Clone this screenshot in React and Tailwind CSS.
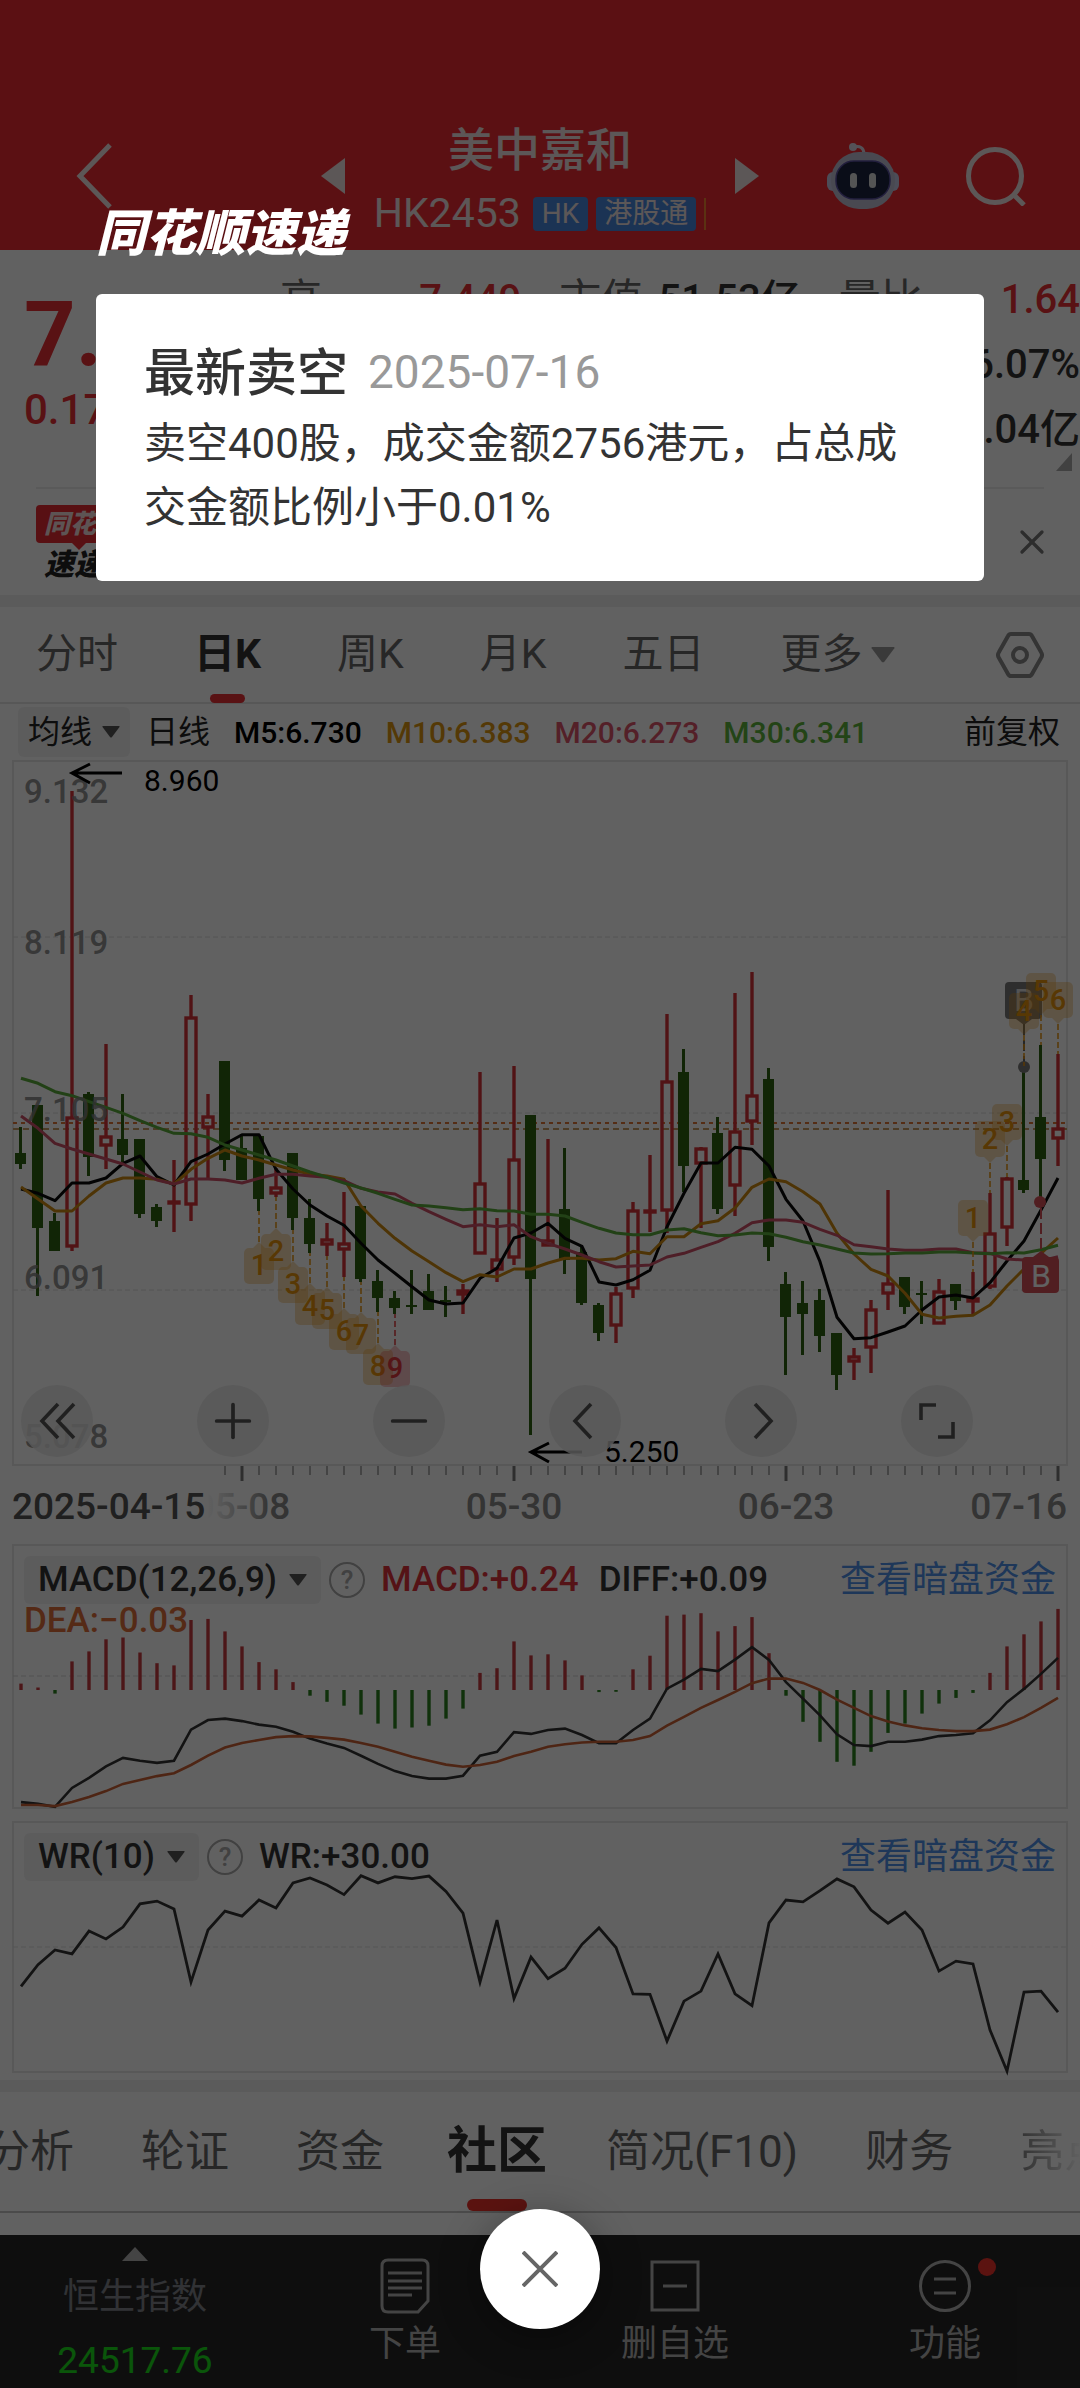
import { Minus, Plus, X } from 'lucide-react';

const FONT = "font-[Roboto,'Noto_Sans_CJK_SC',sans-serif]";

// [up, high, low, bodyTop, bodyBottom]
const candles = [
  [0, 1127, 1169, 1153, 1164], [0, 1105, 1296, 1105, 1228], [0, 1213, 1251, 1221, 1251],
  [1, 791, 1251, 1117, 1247], [0, 1092, 1176, 1094, 1157], [1, 1044, 1169, 1136, 1146],
  [0, 1094, 1165, 1139, 1155], [0, 1139, 1218, 1139, 1214], [0, 1204, 1227, 1207, 1221],
  [1, 1160, 1232, 1201, 1203], [1, 995, 1221, 1017, 1205], [1, 1094, 1180, 1116, 1128],
  [0, 1061, 1171, 1061, 1160], [0, 1135, 1180, 1148, 1180], [0, 1136, 1211, 1136, 1199],
  [1, 1168, 1197, 1187, 1194], [0, 1153, 1230, 1153, 1218], [0, 1199, 1253, 1218, 1244],
  [1, 1223, 1256, 1239, 1245], [1, 1192, 1277, 1243, 1250], [0, 1206, 1282, 1206, 1279],
  [0, 1270, 1312, 1281, 1298], [0, 1291, 1314, 1298, 1308], [0, 1270, 1314, 1305, 1307],
  [0, 1274, 1310, 1291, 1310], [0, 1286, 1317, 1300, 1302], [1, 1284, 1314, 1290, 1295],
  [1, 1072, 1254, 1183, 1254], [1, 1218, 1282, 1259, 1270], [1, 1066, 1265, 1159, 1258],
  [0, 1115, 1435, 1115, 1279], [1, 1139, 1246, 1240, 1246], [0, 1148, 1274, 1209, 1260],
  [0, 1247, 1305, 1252, 1303], [0, 1303, 1341, 1305, 1333], [1, 1287, 1343, 1293, 1326],
  [1, 1202, 1298, 1210, 1289], [1, 1155, 1232, 1210, 1212], [1, 1014, 1233, 1081, 1211],
  [0, 1049, 1192, 1072, 1166], [1, 1147, 1228, 1148, 1164], [0, 1117, 1214, 1133, 1209],
  [1, 993, 1216, 1131, 1186], [1, 972, 1145, 1095, 1122], [0, 1068, 1261, 1079, 1247],
  [0, 1272, 1375, 1284, 1317], [0, 1281, 1355, 1303, 1314], [0, 1289, 1352, 1300, 1336],
  [0, 1333, 1390, 1333, 1375], [1, 1348, 1380, 1356, 1362], [1, 1300, 1373, 1309, 1348],
  [1, 1190, 1310, 1283, 1294], [0, 1277, 1314, 1277, 1307], [0, 1281, 1324, 1293, 1295],
  [1, 1279, 1324, 1291, 1324], [0, 1284, 1310, 1284, 1301], [1, 1272, 1314, 1298, 1302],
  [1, 1193, 1289, 1233, 1287], [1, 1177, 1246, 1178, 1228], [0, 1066, 1193, 1180, 1190],
  [0, 1045, 1202, 1117, 1159], [1, 1054, 1166, 1128, 1139],
];

const ma5 = [327, 340, 362, 309, 309, 294, 250, 228, 290, 315, 245, 222, 192, 164, 164, 268, 327, 375, 408, 436, 490, 540, 580, 620, 660, 672, 669, 595, 565, 474, 459, 430, 475, 499, 606, 615, 599, 571, 440, 340, 249, 249, 202, 208, 258, 358, 423, 545, 712, 776, 773, 756, 738, 690, 651, 645, 654, 608, 543, 483, 390, 294];
const ma10 = [321, 357, 393, 393, 348, 309, 294, 294, 298, 312, 268, 235, 210, 228, 240, 255, 270, 282, 288, 298, 378, 430, 475, 513, 545, 578, 605, 584, 591, 567, 567, 549, 535, 535, 540, 536, 514, 521, 470, 470, 431, 422, 384, 322, 297, 305, 335, 372, 460, 522, 568, 588, 640, 703, 714, 709, 706, 675, 618, 567, 520, 474];
const ma20 = [108, 145, 190, 207, 222, 237, 252, 276, 300, 312, 297, 297, 300, 309, 295, 283, 283, 288, 292, 302, 325, 336, 342, 370, 395, 418, 440, 434, 440, 434, 470, 490, 507, 525, 545, 561, 558, 555, 531, 520, 502, 485, 460, 428, 420, 420, 427, 448, 466, 494, 500, 507, 511, 511, 507, 507, 518, 520, 537, 540, 543, 530];
const ma30 = [-5, 10, 35, 47, 65, 82, 100, 122, 142, 160, 161, 172, 195, 210, 225, 240, 258, 276, 292, 309, 324, 340, 358, 375, 378, 383, 389, 386, 392, 393, 403, 403, 408, 427, 445, 459, 464, 464, 450, 446, 458, 467, 465, 459, 461, 472, 485, 495, 507, 519, 522, 521, 519, 519, 516, 516, 519, 521, 518, 519, 509, 496];

const macdBars = [430, 441, 458, 368, 340, 306, 301, 343, 373, 379, 252, 249, 284, 326, 370, 390, 426, 464, 481, 492, 517, 542, 556, 553, 548, 528, 500, 400, 387, 312, 351, 348, 365, 407, 454, 453, 390, 352, 240, 237, 233, 284, 269, 244, 345, 464, 537, 593, 649, 660, 621, 568, 542, 514, 486, 470, 456, 400, 326, 292, 256, 221];
const diff = [762, 767, 775, 722, 694, 662, 638, 646, 652, 646, 559, 532, 528, 535, 545, 551, 565, 584, 598, 610, 632, 655, 675, 689, 696, 696, 688, 632, 621, 566, 571, 560, 556, 574, 597, 597, 560, 528, 444, 419, 389, 395, 363, 328, 364, 426, 472, 519, 572, 602, 605, 593, 593, 587, 577, 574, 569, 533, 482, 445, 403, 358];
const dea = [770, 770, 773, 762, 748, 731, 711, 700, 689, 681, 658, 632, 609, 596, 588, 580, 577, 578, 582, 587, 596, 607, 621, 635, 646, 657, 663, 658, 649, 633, 621, 607, 600, 595, 593, 593, 588, 577, 548, 523, 498, 476, 453, 429, 416, 416, 428, 448, 475, 498, 521, 536, 547, 555, 560, 563, 563, 559, 544, 524, 498, 470];
const wr = [1278, 1217, 1176, 1187, 1123, 1145, 1112, 1047, 1039, 1061, 1266, 1120, 1067, 1081, 1036, 1058, 988, 974, 994, 1021, 968, 988, 971, 976, 969, 1012, 1073, 1266, 1092, 1312, 1196, 1256, 1227, 1160, 1114, 1169, 1299, 1300, 1431, 1319, 1291, 1187, 1299, 1332, 1100, 1036, 1041, 1010, 977, 999, 1064, 1101, 1070, 1120, 1235, 1207, 1215, 1400, 1515, 1294, 1291, 1350];

// [candle index, label, y of the pointer tip]
const countsBelow = [[14, 1, 1242], [15, 2, 1228], [16, 3, 1261], [17, 4, 1283], [18, 5, 1287], [19, 6, 1308], [20, 7, 1312], [21, 8, 1343], [22, 9, 1345]];
const countsAbove = [[56, 1, 1242], [57, 2, 1163], [58, 3, 1146], [59, 4, 1035], [60, 5, 1015], [61, 6, 1024]];

const px = (i) => 21 + i * 17;
const line = (values, base, unit) => values.map((v, i) => `${px(i)},${(base + v / unit).toFixed(1)}`).join(' ');

function Candle({ i, data }) {
  const [up, high, low, top, bottom] = data;
  const x = px(i);
  if (!up) {
    return (
      <g fill="#2f6112">
        <rect x={x - 2} y={high} width="3" height={low - high} />
        <rect x={x - 6} y={top} width="11" height={bottom - top} />
      </g>
    );
  }
  return (
    <g stroke="#d63238" strokeWidth="3.4" fill="none">
      <path d={`M${x} ${high}V${top}M${x} ${bottom}V${low}`} />
      <rect x={x - 5} y={top + 1} width="10" height={Math.max(bottom - top - 2, 1)} />
    </g>
  );
}

function CountBadge({ i, label, tip, up }) {
  const x = px(i);
  const s = up ? 1 : -1;
  const color = label === 9 ? '#e0383e' : '#e8930c';
  const end = up ? candles[i][2] : candles[i][1];
  return (
    <g>
      <path d={`M${x} ${tip}V${end}`} stroke={color} strokeWidth="1.5" strokeDasharray="6 3" />
      <rect x={x - 15} y={up ? tip + 6 : tip - 42} width="30" height="36" rx="5" fill={color} opacity="0.3" />
      <path d={`M${x} ${tip}l6 ${6 * s}h-12z`} fill={color} opacity="0.3" />
      <text x={x} y={up ? tip + 33 : tip - 14} fontSize="29" fontWeight="500" textAnchor="middle" fill={color}>{label}</text>
    </g>
  );
}

function KChart() {
  return (
    <svg viewBox="0 760 1080 780" className="block w-full" aria-label="日K">
      <defs>
        <linearGradient id="fade" x1="0" x2="1">
          <stop offset="0.75" stopColor="#fff" />
          <stop offset="1" stopColor="#fff" stopOpacity="0" />
        </linearGradient>
      </defs>
      <rect x="13" y="761" width="1054" height="704" fill="none" stroke="#e6e6e6" strokeWidth="2" />
      <g stroke="#dcdcdc" strokeDasharray="5 3">
        <path d="M13 937H1067" />
        <path d="M13 1113H1067" />
        <path d="M13 1290H1067" />
      </g>
      <path d="M13 1123H1067" stroke="#e07838" strokeWidth="2" strokeDasharray="4 4" />
      <path d="M13 1129H1067" stroke="#c89c64" strokeWidth="2" strokeDasharray="6 4" />
      {candles.map((c, i) => <Candle key={i} i={i} data={c} />)}
      <g fill="none" strokeWidth="3" strokeLinejoin="round">
        <polyline points={line(ma5, 1080, 3)} stroke="#0a0a0a" />
        <polyline points={line(ma10, 1080, 3)} stroke="#cc8a10" />
        <polyline points={line(ma20, 1080, 3)} stroke="#cc5068" />
        <polyline points={line(ma30, 1080, 3)} stroke="#5aaa3c" />
      </g>
      <g fontSize="33" fontWeight="500" fill="#808080" fillOpacity="0.85">
        <text x="24" y="803">9.132</text>
        <text x="24" y="954">8.119</text>
        <text x="24" y="1121">7.105</text>
        <text x="24" y="1289">6.091</text>
        <text x="24" y="1448">5.078</text>
      </g>
      <g stroke="#000" strokeWidth="3" fill="none">
        <path d="M122 773H72M90 764L72 773L90 783" />
        <path d="M582 1452H531M549 1443L531 1452L549 1462" />
      </g>
      <g fontSize="30" fill="#000">
        <text x="144" y="791">8.960</text>
        <text x="604" y="1462">5.250</text>
      </g>
      <g>
        <rect x="1005" y="982" width="37" height="37" rx="4" fill="#7a7a7a" />
        <path d="M1016 1019h16l-8 6z" fill="#7a7a7a" />
        <path d="M1024 1024V1064" stroke="#666" strokeWidth="2" strokeDasharray="11 5" />
        <circle cx="1024" cy="1067" r="6" fill="#7a7a7a" />
        <text x="1024" y="1011" fontSize="32" textAnchor="middle" fill="#ddd">B</text>
        <circle cx="1040" cy="1202" r="6" fill="#d65058" />
        <path d="M1041 1208V1250" stroke="#d65058" strokeWidth="2" strokeDasharray="11 4" />
        <rect x="1022" y="1257" width="37" height="36" rx="4" fill="#d65058" />
        <path d="M1033 1257h16l-8 -6z" fill="#d65058" />
        <text x="1041" y="1287" fontSize="32" textAnchor="middle" fill="#fff">B</text>
      </g>
      {countsBelow.map(([i, label, tip]) => <CountBadge key={i} i={i} label={label} tip={tip} up />)}
      {countsAbove.map(([i, label, tip]) => <CountBadge key={i} i={i} label={label} tip={tip} />)}
      {candles.map((_, i) => {
        const major = i % 16 === 13;
        return i > 11 && <path key={i} d={`M${px(i)} 1466V${major ? 1481 : 1475}`} stroke={major ? '#7a7a7a' : '#b4b4b4'} strokeWidth={major ? 3 : 2} />;
      })}
      <g fontSize="37" fill="#888" textAnchor="middle" fontWeight="500">
        <text x="242" y="1519">05-08</text>
        <text x="514" y="1519">05-30</text>
        <text x="786" y="1519">06-23</text>
        <text x="1067" y="1519" textAnchor="end">07-16</text>
      </g>
      <rect x="12" y="1484" width="260" height="44" fill="url(#fade)" />
      <text x="12" y="1519" fontSize="37" fontWeight="500" fill="#555">2025-04-15</text>
    </svg>
  );
}

function Caret({ className }) {
  return (
    <svg viewBox="0 0 18 12" className={className} fill="currentColor">
      <path d="M1 0h16q1 0 .5 1L10 11q-1 1-2 0L.5 1Q0 0 1 0z" />
    </svg>
  );
}

function PanelHeader({ name, children }) {
  return (
    <div className="absolute inset-x-6 top-4 flex h-12 items-center text-[35px] font-medium text-[#333]">
      <button className="flex h-12 items-center gap-3 rounded-md bg-[#f2f2f2] px-[14px]">
        {name}
        <Caret className="w-[18px] text-[#555]" />
      </button>
      <button className="ml-2 flex size-9 shrink-0 items-center justify-center rounded-full border-2 border-[#aaa] text-[26px] text-[#aaa]">?</button>
      <div className="ml-4 flex gap-5">{children}</div>
      <a href="#dark" className="ml-auto text-[36px] font-normal text-[#4f92ea]">查看暗盘资金</a>
    </div>
  );
}

function MacdPanel() {
  return (
    <section className="relative">
      <svg viewBox="0 1540 1080 277" className="block w-full">
        <rect x="13" y="1545" width="1054" height="263" fill="none" stroke="#e6e6e6" strokeWidth="2" />
        <path d="M13 1676H1067" stroke="#d4d4d4" strokeDasharray="5 3" />
        {macdBars.map((v, i) => (
          <path key={i} d={`M${px(i)} 1690V${(1530 + v / 2.8).toFixed(1)}`} stroke={v < 448 ? '#c83c40' : '#2c801e'} strokeWidth="3.4" />
        ))}
        <polyline points={line(diff, 1530, 2.8)} fill="none" stroke="#333" strokeWidth="2.6" />
        <polyline points={line(dea, 1530, 2.8)} fill="none" stroke="#cc6236" strokeWidth="2.6" />
      </svg>
      <PanelHeader name="MACD(12,26,9)">
        <span className="text-[#e0343a]">MACD:+0.24</span>
        <span>DIFF:+0.09</span>
      </PanelHeader>
      <span className="absolute top-16 left-6 text-[35px] leading-[34px] font-medium text-[#e0703a]">DEA:−0.03</span>
    </section>
  );
}

function WrPanel() {
  return (
    <section className="relative">
      <svg viewBox="0 1817 1080 263" className="block w-full">
        <rect x="13" y="1822" width="1054" height="250" fill="none" stroke="#e6e6e6" strokeWidth="2" />
        <path d="M13 1947H1067" stroke="#e0e0e0" strokeDasharray="5 3" />
        <polyline points={line(wr, 1530, 2.8)} fill="none" stroke="#333" strokeWidth="2.8" />
      </svg>
      <PanelHeader name="WR(10)">
        <span>WR:+30.00</span>
      </PanelHeader>
    </section>
  );
}

function Robot() {
  return (
    <svg viewBox="0 0 72 68" className="w-[72px]">
      <path d="M27 5Q36 3 37 11" fill="none" stroke="#dcd8e8" strokeWidth="3" />
      <circle cx="26" cy="5" r="4" fill="#dcd8e8" />
      <rect x="0" y="30" width="72" height="19" rx="6" fill="#c9cbe6" />
      <rect x="4" y="10" width="64" height="57" rx="28" fill="#c0c0d4" />
      <rect x="9" y="19" width="54" height="38" rx="18" fill="#1c2340" stroke="#5a50a0" strokeWidth="1.5" />
      <rect x="23" y="31" width="7" height="15" rx="3.5" fill="#ddd" />
      <rect x="42" y="31" width="7" height="15" rx="3.5" fill="#ddd" />
    </svg>
  );
}

function Header() {
  return (
    <header className="grid h-[250px] grid-cols-[1fr_390px_1fr] items-center bg-[#f02c34] pt-[102px] text-[#f2e4e4]">
      <div className="flex items-center justify-between pl-[76px]">
        <button aria-label="返回">
          <svg viewBox="0 0 36 66" className="w-9" fill="none" stroke="currentColor" strokeWidth="5"><path d="M34 2L4 33L34 64" /></svg>
        </button>
        <button aria-label="上一只">
          <svg viewBox="0 0 24 36" className="w-6" fill="currentColor"><path d="M0 18L24 0V36z" /></svg>
        </button>
      </div>
      <div className="flex flex-col items-center self-end pb-1">
        <h1 className="text-[46px] leading-[64px] font-medium">美中嘉和</h1>
        <div className="flex h-16 items-center gap-2 text-[41px]">
          <span className="mr-1">HK2453</span>
          <span className="rounded-sm bg-[#4886de] px-[9px] text-[28px] leading-[34px]">HK</span>
          <span className="rounded-sm bg-[#4886de] px-2 text-[28px] leading-[34px]">港股通</span>
          <span className="h-8 w-[2px] bg-[#f08030]" />
        </div>
      </div>
      <div className="flex items-center justify-between pr-[54px]">
        <button aria-label="下一只">
          <svg viewBox="0 0 24 36" className="w-6" fill="currentColor"><path d="M24 18L0 0V36z" /></svg>
        </button>
        <button aria-label="助手"><Robot /></button>
        <button aria-label="搜索">
          <svg viewBox="0 0 60 60" className="w-[60px]" fill="none" stroke="currentColor" strokeWidth="5">
            <circle cx="29" cy="30" r="26.5" />
            <path d="M47 48L58 59" />
          </svg>
        </button>
      </div>
    </header>
  );
}

function Quote() {
  return (
    <section className="relative flex h-[237px] text-[#e93036]">
      <div className="w-[280px] shrink-0 pt-11 pl-6">
        <p className="text-[90px] leading-[84px] font-bold">7.060</p>
        <p className="text-[42px] leading-[64px] font-medium">0.17</p>
      </div>
      <dl className="grid flex-1 grid-cols-3 content-start gap-x-[38px] pt-[17px] text-[42px] leading-[65px]">
        <div className="flex justify-between"><dt className="text-[#666]">高</dt><dd className="text-[40px] font-medium">7.449</dd></div>
        <div className="flex justify-between"><dt className="text-[#666]">市值</dt><dd className="text-[40px] font-medium text-[#333]">51.53亿</dd></div>
        <div className="flex justify-between"><dt className="text-[#666]">量比</dt><dd className="text-[40px] font-medium">1.64</dd></div>
        <dd className="col-start-3 text-right text-[40px] font-medium text-[#333]">6.07%</dd>
        <dd className="col-start-3 text-right text-[40px] font-medium text-[#333]">5.04亿</dd>
      </dl>
      <svg viewBox="0 0 16 18" className="absolute right-2 bottom-4 w-4" fill="#aaa"><path d="M16 0V18H0z" /></svg>
    </section>
  );
}

function Banner() {
  return (
    <section className="mx-9 flex h-[108px] items-center justify-between border-t-2 border-[#ececec]">
      <div className="leading-none font-black italic">
        <p className="rounded-sm bg-[#e82a32] py-[6px] pr-2 pl-2 text-[26px] text-[#f4dcdc]">同花顺</p>
        <svg viewBox="0 0 14 7" className="ml-9 w-[14px]" fill="#e82a32"><path d="M0 0h14L7 7z" /></svg>
        <p className="pl-2 text-[30px] text-[#222]">速递</p>
      </div>
      <button aria-label="关闭提示"><X className="-mr-2 size-10 text-[#777]" strokeWidth={2} /></button>
    </section>
  );
}

function PeriodTabs() {
  return (
    <nav className="flex h-[97px] items-center gap-[76px] border-b-2 border-[#e4e4e4] px-[36px] text-[41px] text-[#666]">
      <button>分时</button>
      <button className="relative font-bold text-[#333]">
        日K
        <span className="absolute inset-x-4 -bottom-[18px] h-[9px] rounded-full bg-[#e93036]" />
      </button>
      <button>周K</button>
      <button>月K</button>
      <button>五日</button>
      <button className="flex items-center gap-2">更多<Caret className="w-6 text-[#999]" /></button>
      <button aria-label="设置" className="ml-auto">
        <svg viewBox="0 0 48 46" className="w-12" fill="none" stroke="#888" strokeWidth="4">
          <path d="M15 2H33Q35 2 36 4L45 20Q47 23 45 26L36 42Q35 44 33 44H15Q13 44 12 42L3 26Q1 23 3 20L12 4Q13 2 15 2z" />
          <circle cx="24" cy="23" r="7" />
        </svg>
      </button>
    </nav>
  );
}

function MaRow() {
  return (
    <div className="flex h-[56px] items-center gap-6 pr-5 pl-[18px] text-[30px] font-medium text-[#222]">
      <button className="flex h-[50px] items-center gap-[10px] rounded-md bg-[#f2f2f2] px-[10px] text-[32px] font-normal">均线<Caret className="w-[18px] text-[#555]" /></button>
      <span className="-ml-2 text-[32px] font-normal">日线</span>
      <span className="text-black">M5:6.730</span>
      <span className="text-[#dd9612]">M10:6.383</span>
      <span className="text-[#dc546a]">M20:6.273</span>
      <span className="text-[#5cb23c]">M30:6.341</span>
      <button className="ml-auto text-[32px] font-normal">前复权</button>
    </div>
  );
}

function StrokeIcon({ d }) {
  return (
    <svg viewBox="0 0 38 38" className="size-[38px]" fill="none" stroke="currentColor" strokeWidth="3.6">
      <path d={d} />
    </svg>
  );
}

function ChartControls() {
  const items = [
    ['最早', <StrokeIcon d="M20 2L4 19L20 36M36 2L20 19L36 36" />],
    ['放大', <Plus className="size-14" strokeWidth={1.6} />],
    ['缩小', <Minus className="size-14" strokeWidth={1.6} />],
    ['向左', <StrokeIcon d="M25 2L9 19L25 36" />],
    ['向右', <StrokeIcon d="M13 2L29 19L13 36" />],
    ['全屏', <StrokeIcon d="M3 18V3H18M20 35H35V20" />],
  ];
  return (
    <div className="absolute right-[107px] bottom-[83px] left-[21px] flex justify-between text-[#555]">
      {items.map(([label, node]) => (
        <button key={label} aria-label={label} className="flex size-[72px] items-center justify-center rounded-full bg-[#e9e9e9]/85">{node}</button>
      ))}
    </div>
  );
}

function InfoTabs() {
  return (
    <nav className="flex h-[121px] items-center gap-[67px] overflow-hidden border-b-2 border-[#c4c4c4] text-[44px] whitespace-nowrap text-[#666]">
      <button className="-ml-[14px]">分析</button>
      <button>轮证</button>
      <button>资金</button>
      <button className="relative -mx-1 text-[50px] font-bold text-[#333]">
        社区
        <span className="absolute inset-x-5 -bottom-[22px] h-3 rounded-full bg-[#f0322c]" />
      </button>
      <button className="-ml-1">简况(F10)</button>
      <button>财务</button>
      <button className="bg-linear-to-r from-[#888] to-white to-70% bg-clip-text text-transparent">亮点</button>
    </nav>
  );
}

function BottomBar() {
  return (
    <footer className="grid h-[153px] grid-cols-4 bg-[#272727] text-[36px] leading-[40px] text-[#b4b4b4]">
      <button className="flex flex-col items-center pt-3">
        <svg viewBox="0 0 26 14" className="w-[26px]" fill="#b4b4b4"><path d="M13 0L26 14H0z" /></svg>
        <span className="mt-4 text-[#80848c]">恒生指数</span>
        <span className="mt-6 text-[37px] text-[#1ce01c]">24517.76</span>
      </button>
      <button className="flex flex-col items-center gap-[10px] pt-[23px]">
        <svg viewBox="0 0 50 56" className="h-14" fill="none" stroke="currentColor" strokeWidth="3">
          <path d="M8 2H42Q48 2 48 8V43L38 54H8Q2 54 2 48V8Q2 2 8 2zM8 15H42M8 23H42M8 30H42M8 37H32" />
        </svg>
        下单
      </button>
      <button className="flex flex-col items-center gap-[10px] pt-[23px]">
        <svg viewBox="0 0 50 56" className="h-14" fill="none" stroke="currentColor" strokeWidth="3">
          <path d="M2 4H48V52H2zM13 28H37" />
        </svg>
        删自选
      </button>
      <button className="flex flex-col items-center gap-[10px] pt-[23px]">
        <span className="relative">
          <svg viewBox="0 0 54 56" className="h-14" fill="none" stroke="currentColor" strokeWidth="3">
            <circle cx="27" cy="28" r="24.5" />
            <path d="M16 21H38M16 35H38" />
          </svg>
          <span className="absolute top-0 -right-6 size-[18px] rounded-full bg-[#f0322c]" />
        </span>
        功能
      </button>
    </footer>
  );
}

function ShortSellDialog() {
  return (
    <div role="dialog" aria-modal="true" aria-labelledby="short-title" className="absolute inset-0 flex flex-col items-center bg-black/62 px-24 pt-[204px] pb-[59px]">
      <p className="w-full text-[50px] leading-[60px] font-black text-white italic">同花顺速递</p>
      <section className="mt-[30px] w-full rounded-md bg-white px-12 pt-[42px] pb-[41px] text-[#333]">
        <div className="flex items-center gap-5">
          <h2 id="short-title" className="text-[51px] leading-[76px] font-medium">最新卖空</h2>
          <time className="pb-1 text-[46px] text-[#999]">2025-07-16</time>
        </div>
        <p className="text-[42px] leading-[64px]">卖空400股，成交金额2756港元，占总成交金额比例小于0.01%</p>
      </section>
      <button aria-label="关闭" className="mt-auto flex size-[120px] items-center justify-center rounded-full bg-white shadow-[0_8px_40px_rgba(0,0,0,0.35)]">
        <svg viewBox="0 0 36 36" className="size-9" stroke="#666" strokeWidth="4"><path d="M1 1L35 35M35 1L1 35" /></svg>
      </button>
    </div>
  );
}

export default function App() {
  return (
    <div className={`relative overflow-hidden bg-white ${FONT}`}>
      <Header />
      <Quote />
      <Banner />
      <div className="h-3 bg-[#f0f0f0]" />
      <PeriodTabs />
      <MaRow />
      <main>
        <div className="relative">
          <KChart />
          <ChartControls />
        </div>
        <MacdPanel />
        <WrPanel />
      </main>
      <div className="h-3 bg-[#f0f0f0]" />
      <InfoTabs />
      <div className="h-[22px]" />
      <BottomBar />
      <ShortSellDialog />
    </div>
  );
}
